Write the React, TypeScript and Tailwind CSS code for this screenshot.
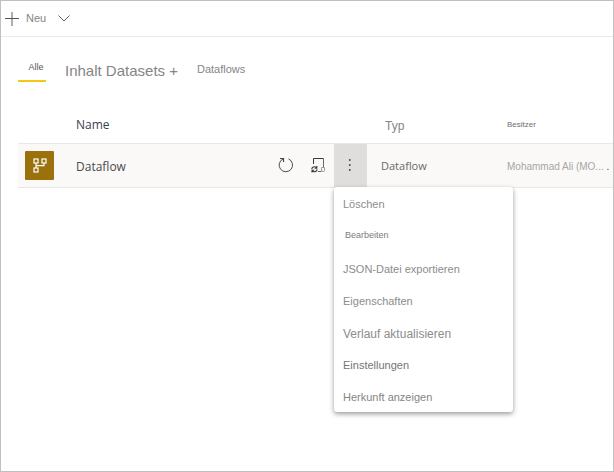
const menuItems = [
  { label: 'Löschen', style: 'pt-0.5 pl-[9px] text-[11px] text-[#8c8c8c]' },
  { label: 'Bearbeiten', style: 'pl-[11px] text-[9px] text-[#7c7c7c]' },
  { label: 'JSON-Datei exportieren', style: 'pt-1 pl-[9px] text-[11px] text-[#8c8c8c]' },
  { label: 'Eigenschaften', style: 'pt-1 pl-[9px] text-[11px] text-[#8c8c8c]' },
  { label: 'Verlauf aktualisieren', style: 'pt-1 pl-[9px] text-[12px] text-[#8c8c8c]' },
  { label: 'Einstellungen', style: 'pt-1 pl-[9px] text-[11px] text-[#757575]' },
  { label: 'Herkunft anzeigen', style: 'pt-1 pl-[9px] text-[11px] text-[#858585]' },
];

function PlusIcon() {
  return (
    <svg width="14" height="14" viewBox="0 0 14 14" fill="none" aria-hidden="true">
      <path d="M7 0V14" stroke="#777777" strokeWidth="1.2" />
      <path d="M0 6.5H14" stroke="#555555" />
    </svg>
  );
}

function ChevronIcon() {
  return (
    <svg width="12" height="7" viewBox="0 0 12 7" fill="none" stroke="#666666" aria-hidden="true">
      <path d="M0.5 0.5L6 6L11.5 0.5" />
    </svg>
  );
}

function DataflowIcon() {
  return (
    <svg width="14" height="15" viewBox="0 0 14 15" fill="none" stroke="#ffffff" strokeWidth="1.2" aria-hidden="true">
      <rect x="1" y="1" width="4" height="4" />
      <rect x="9" y="1" width="4" height="4" />
      <rect x="1" y="10" width="4" height="4" />
      <path d="M3 5V10M3 7.7H11V5" />
    </svg>
  );
}

function RefreshIcon() {
  return (
    <svg width="16" height="16" viewBox="0 0 16 16" fill="none" stroke="#4a4a49" aria-hidden="true">
      <path d="M10.5 1.9A6.7 6.7 0 1 1 5.2 1.9" />
      <path d="M2 1.5H5.5V5" strokeWidth="1.2" />
    </svg>
  );
}

function ScheduleIcon() {
  return (
    <svg width="14" height="16" viewBox="0 0 14 16" fill="none" stroke="#3b3a39" aria-hidden="true">
      <path d="M2.5 7V1.5H12.5" />
      <path d="M12.5 1.5V10M6.8 14.5H10.5" stroke="#666666" />
      <path d="M10.5 10.5H13.5V13.5Q13.5 14.5 12.3 14.5Q10.5 14.5 10.5 13V10.5" stroke="#999999" />
      <path d="M0.7 12.2Q1.2 9.7 3.6 9.8Q4.8 9.9 5.6 11M5.8 9V11.3H3.6M6.2 12.4Q5.6 14.8 3.2 14.8Q1.8 14.6 1.1 13.6M1 15.5V13.3H3.2" strokeWidth="1.1" />
    </svg>
  );
}

function MoreIcon() {
  return (
    <svg width="5" height="14" viewBox="0 0 5 14" fill="#444444" aria-hidden="true">
      <circle cx="1.8" cy="2" r="0.9" />
      <circle cx="1.8" cy="7" r="0.9" />
      <circle cx="1.8" cy="12" r="0.9" />
    </svg>
  );
}

export default function App() {
  return (
    <div className="min-h-screen border border-[#c0c0c0] bg-white font-['Liberation_Sans',Arial,sans-serif] text-[11px] text-[#858585]">
      <header className="flex h-9 items-center border-b border-[#eaeaea] pl-1">
        <button type="button" className="flex items-center gap-[7px]">
          <PlusIcon />
          Neu
        </button>
        <button type="button" aria-label="Weitere Optionen" className="ml-2.5 p-0.5">
          <ChevronIcon />
        </button>
      </header>

      <nav className="flex items-start pt-[18px] pl-[17px]">
        <a href="#alle" className="flex h-[27px] w-7 justify-center border-b-2 border-[#f2c811] pt-1.5 pl-2 text-[9px] leading-3 text-[#555555]">
          Alle
        </a>
        <a href="#datasets" className="ml-[19px] pt-1.5 text-[15px] leading-5">Inhalt Datasets +</a>
        <a href="#dataflows" className="ml-[19px] pt-1.5 leading-4">Dataflows</a>
      </nav>

      <main className="pt-6 pl-[17px]">
        <table className="w-full table-fixed border-collapse text-left">
          <colgroup>
            <col className="w-[58px]" />
            <col />
            <col className="w-[98px]" />
            <col className="w-[140px]" />
            <col className="w-24" />
            <col className="w-2.5" />
          </colgroup>
          <thead>
            <tr className="h-[37px] border-b border-[#e9e8e6]">
              <td />
              <th scope="col" className="p-0 pt-0.5 font-['Open_Sans','Noto_Sans',sans-serif] text-[12px] font-normal text-[#3b4052]">Name</th>
              <td />
              <th scope="col" className="p-0 pt-1 pl-[18px] text-[12px] font-normal">Typ</th>
              <th scope="col" className="p-0 pt-0.5 text-[8px] font-normal text-[#707070]">Besitzer</th>
              <td />
            </tr>
          </thead>
          <tbody>
            <tr className="h-11 border-b border-[#e9e8e6] bg-[#faf9f8]">
              <td className="p-0 pl-[7px]">
                <span className="flex size-[29px] items-center justify-center rounded-[1px] bg-[#9b710b]">
                  <DataflowIcon />
                </span>
              </td>
              <td className="p-0 pt-1 font-['Open_Sans','Noto_Sans',sans-serif] text-[12px] text-[#4a4a4a]">Dataflow</td>
              <td className="p-0">
                <div className="flex h-[43px] items-stretch justify-end">
                  <button type="button" aria-label="Jetzt aktualisieren" className="flex w-8 items-center justify-center">
                    <RefreshIcon />
                  </button>
                  <button type="button" aria-label="Aktualisierung planen" className="flex w-8 items-center justify-center">
                    <ScheduleIcon />
                  </button>
                  <div className="relative w-[33px]">
                    <button type="button" aria-label="Weitere Optionen" aria-expanded="true" className="flex size-full items-center justify-center bg-[#dfdedd]">
                      <MoreIcon />
                    </button>
                    <ul className="absolute top-full left-0 z-10 w-[179px] rounded-[3px] bg-white pt-px shadow-[0_2px_5px_rgba(0,0,0,0.4)]">
                      {menuItems.map((item) => (
                        <li key={item.label}>
                          <button type="button" className={`block h-8 w-full text-left ${item.style}`}>
                            {item.label}
                          </button>
                        </li>
                      ))}
                    </ul>
                  </div>
                </div>
              </td>
              <td className="p-0 pt-0.5 pl-3.5 font-['Open_Sans','Noto_Sans',sans-serif] text-[#686868]">Dataflow</td>
              <td className="p-0 pt-0.5 text-[10px] whitespace-nowrap text-[#a6a6a6]">Mohammad Ali (MO...</td>
              <td className="p-0 pt-0.5 text-center text-[10px] text-[#444444]">.</td>
            </tr>
          </tbody>
        </table>
      </main>
    </div>
  );
}
